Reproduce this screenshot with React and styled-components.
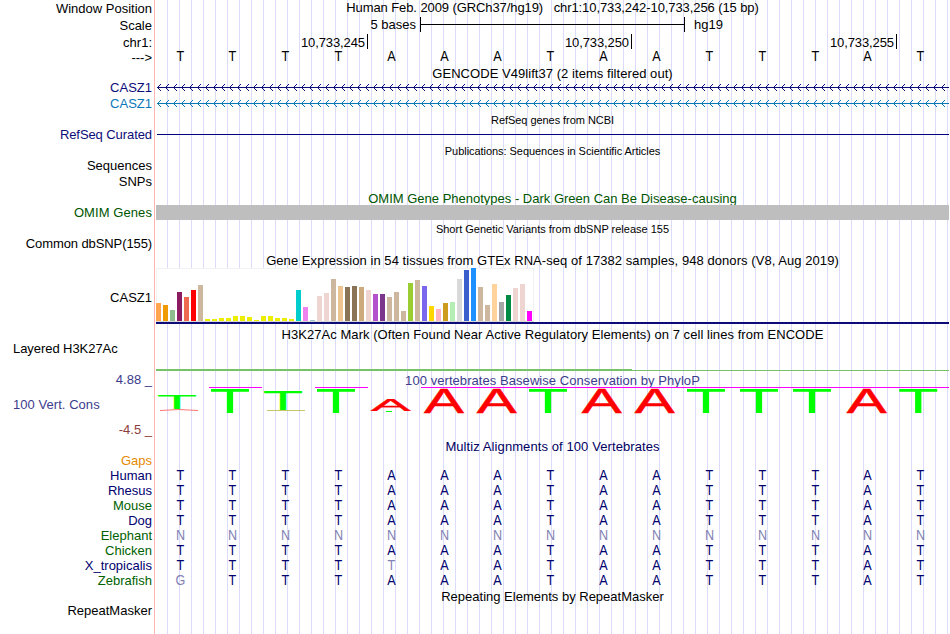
import React from 'react'
import styled, { createGlobalStyle } from 'styled-components'

const GlobalStyle = createGlobalStyle`
body{
margin:0;
background:#ffffff;
overflow:hidden;
}
`
const MainContainer = styled.div`
display:flex;
width:949px;
height:634px;
overflow:hidden;
background:#ffffff;
font-family:"Liberation Sans", Arial, sans-serif;
font-size:13px;
line-height:15px;
color:#000000;
`
const LabelColumn = styled.div`
width:152px;
padding-right:2px;
flex-shrink:0;
border-right:1px solid #ffb4b4;
`
const Label = styled.div`
height:15px;
margin-top:${props => props.$gap || 0}px;
padding-left:13px;
text-align:${props => props.$left ? 'left' : 'right'};
color:${props => props.$color || '#000000'};
letter-spacing:${props => props.$spacing || 0}px;
white-space:pre;
`
const DataColumn = styled.div`
width:793px;
margin-left:1px;
flex-shrink:0;
background:repeating-linear-gradient(to right, transparent 0px, transparent 11px, #dcdcfa 11px, #dcdcfa 12px);
`
const Title = styled.div`
height:${props => props.$height || 15}px;
margin-top:${props => props.$gap || 0}px;
font-size:${props => props.$small ? 11 : 13}px;
letter-spacing:${props => props.$spacing || 0}px;
color:${props => props.$color || '#000000'};
text-align:center;
white-space:pre;
`
const ScaleRow = styled.div`
display:flex;
height:15px;
margin-top:2px;
`
const ScaleText = styled.div`
width:${props => props.$width}px;
padding:0 4px 0 9px;
box-sizing:border-box;
text-align:${props => props.$align};
`
const Ruler = styled.div`
display:flex;
align-items:center;
width:265px;
height:15px;
box-sizing:border-box;
border-left:1px solid #000000;
border-right:1px solid #000000;
`
const RulerLine = styled.div`
flex:1;
height:1px;
background:#000000;
`
const PositionRow = styled.div`
display:flex;
height:15px;
margin-top:2px;
`
const Position = styled.div`
width:${props => props.$width}px;
height:15px;
line-height:17px;
box-sizing:border-box;
padding-right:2px;
border-right:1px solid #000000;
text-align:right;
letter-spacing:-0.1px;
`
const BaseRow = styled.div`
display:grid;
grid-template-columns:repeat(15, 52.93px);
height:15px;
margin-top:${props => props.$gap || 0}px;
margin-left:-2.5px;
color:${props => props.$color || '#00006e'};
`
const Base = styled.span`
text-align:center;
font-size:14px;
transform:scaleX(0.9);
${props => props.$mismatch && 'color:#8282b4;'}
`
const Drawing = styled.svg`
display:block;
margin-top:${props => props.$gap || 0}px;
overflow:visible;
`
const ThinLine = styled.div`
height:1px;
margin:${props => props.$gap || 0}px 0 0 1px;
background:#00007c;
`
const OmimBar = styled.div`
position:relative;
height:15px;
background:#bebebe;
`

const sequence = 'TTTTAAATAATTTAT'

const species = [
    { name: 'Human', color: '#00006e', bases: sequence },
    { name: 'Rhesus', color: '#00006e', bases: sequence },
    { name: 'Mouse', color: '#005f00', bases: sequence },
    { name: 'Dog', color: '#00006e', bases: sequence },
    { name: 'Elephant', color: '#005f00', bases: 'NNNNNNNNNNNNNNN' },
    { name: 'Chicken', color: '#005f00', bases: sequence },
    { name: 'X_tropicalis', color: '#00006e', bases: 'TTTTTAATAATTTAT' },
    { name: 'Zebrafish', color: '#005f00', bases: 'GTTTAAATAATTTAT' },
]

// [height, color] for each tissue
const tissues = [
    [18, '#ffa54f'], [16, '#ee9a00'], [11, '#8fbc8f'], [29, '#8b1c62'], [24, '#ee6a50'], [31, '#ff0000'], [36, '#cdb79e'],
    [2, '#eeee00'], [2, '#eeee00'], [3, '#eeee00'], [3, '#eeee00'], [5, '#eeee00'], [5, '#eeee00'], [4, '#eeee00'],
    [1, '#eeee00'], [5, '#eeee00'], [5, '#eeee00'], [3, '#eeee00'], [3, '#eeee00'], [2, '#eeee00'],
    [31, '#00cdcd'], [14, '#ee82ee'], [1, '#9ac0cd'], [25, '#eed5d2'], [28, '#eed5d2'], [42, '#cdb79e'], [35, '#eec591'],
    [34, '#8b7355'], [35, '#8b7355'], [34, '#cdaa7d'], [31, '#eed5d2'], [27, '#b452cd'], [27, '#7a378b'], [24, '#cdb79e'],
    [29, '#cdb79e'], [10, '#cdb79e'], [38, '#9acd32'], [41, '#cdb79e'], [35, '#7a67ee'], [15, '#ffd700'], [12, '#ffb6c1'],
    [18, '#cd9b1d'], [19, '#b4eeb4'], [42, '#d9d9d9'], [51, '#3a5fcd'], [53, '#1e90ff'], [34, '#cdb79e'], [16, '#cdb79e'],
    [37, '#ffd39b'], [19, '#a6a6a6'], [26, '#008b45'], [33, '#eed5d2'], [37, '#eed5d2'], [10, '#ff00ff'],
]

// letter, center, top and bottom inside the conservation track
const logo = [
    ['T', 21, 8, 22], ['T', 74, 2, 26], ['T', 127, 4, 23], ['T', 180, 2, 26], ['A', 234.8, 12.5, 24],
    ['A', 288, 2, 26], ['A', 340.7, 2, 26], ['T', 392, 2, 26], ['A', 445.8, 2, 26], ['A', 498.8, 2, 26],
    ['T', 550, 2, 26], ['T', 603, 2, 26], ['T', 656, 2, 26], ['A', 710.8, 2, 26], ['T', 762.3, 2, 26],
]

function GeneLine({ id, color, gap }) {
    return (
        <Drawing $gap={gap} width="793" height="7" shapeRendering="crispEdges">
            <defs>
                <pattern id={id} x="1" y="0" width="8" height="7" patternUnits="userSpaceOnUse">
                    <path d="M0 3h8v1h-8zM1 2h1v1h-1zM2 1h1v1h-1zM3 0h1v1h-1zM1 4h1v1h-1zM2 5h1v1h-1zM3 6h1v1h-1z" fill={color} />
                </pattern>
            </defs>
            <rect x="1" y="0" width="792" height="7" fill={`url(#${id})`} />
        </Drawing>
    )
}

function Expression() {
    return (
        <Drawing width="793" height="56" shapeRendering="crispEdges">
            <rect x="0" y="0" width="378" height="54" fill="#f2f2f2" />
            <rect x="1" y="1" width="376" height="52" fill="#ffffff" />
            <rect x="0" y="53" width="378" height="1" fill="#d8d8d8" />
            {tissues.map(([height, color], index) => (
                <rect key={index} x={index * 7} y={53 - height} width="5" height={height} fill={color} />
            ))}
            <rect x="0" y="54" width="793" height="2" fill="#0c0c78" />
        </Drawing>
    )
}

function Conservation() {
    return (
        <Drawing width="793" height="28">
            <path d="M53 0h53v1h-53zM159 0h53v1h-53zM265 0h528v1h-528z" fill="#ff00ff" />
            {logo.map(([letter, x, top, bottom], index) => (
                <text
                    key={index}
                    fontSize="35"
                    textAnchor="middle"
                    fill={letter === 'T' ? '#00ff00' : '#ff0000'}
                    stroke={letter === 'T' ? 'none' : '#ff0000'}
                    strokeWidth="0.5"
                    transform={`translate(${x} ${bottom}) scale(${letter === 'T' ? 1.92 : 1.71} ${(bottom - top) / 24})`}
                >
                    {letter}
                </text>
            ))}
            <path d="M4 23.5q19 -2 38 0" stroke="#ff5050" fill="none" strokeWidth="0.8" />
            <path d="M111 23.5h38" stroke="#b4b43c" strokeWidth="1.2" opacity="0.75" />
            <path d="M230 24.5h6" stroke="#00ff00" strokeWidth="1" />
        </Drawing>
    )
}

function App() {
    return (
        <MainContainer>
            <GlobalStyle />
            <LabelColumn>
                <Label $gap={1}>Window Position</Label>
                <Label $gap={2}>Scale</Label>
                <Label $gap={2}>chr1:</Label>
                <Label>---&gt;</Label>
                <Label $gap={15} $color="#0c0c78">CASZ1</Label>
                <Label $gap={1} $color="#0c78b8">CASZ1</Label>
                <Label $gap={16} $color="#0c0c78" $spacing={-0.08}>RefSeq Curated</Label>
                <Label $gap={16}>Sequences</Label>
                <Label $gap={1}>SNPs</Label>
                <Label $gap={16} $color="#005500" $spacing={0.08}>OMIM Genes</Label>
                <Label $gap={16} $spacing={-0.1}>Common dbSNP(155)</Label>
                <Label $gap={39}>CASZ1</Label>
                <Label $gap={36} $left $spacing={-0.06}>Layered H3K27Ac</Label>
                <Label $gap={16} $color="#3c3c8c">4.88 _</Label>
                <Label $gap={10} $left $color="#3c3c8c" $spacing={0.05}>100 Vert. Cons</Label>
                <Label $gap={10} $color="#8c3c3c">-4.5 _</Label>
                <Label $gap={16} $color="#e68a00">Gaps</Label>
                {species.map((item) => (
                    <Label key={item.name} $color={item.color}>{item.name}</Label>
                ))}
                <Label $gap={15}>RepeatMasker</Label>
            </LabelColumn>
            <DataColumn>
                <Title $spacing={-0.09}>{'Human Feb. 2009 (GRCh37/hg19)   chr1:10,733,242-10,733,256 (15 bp)'}</Title>
                <ScaleRow>
                    <ScaleText $width={264} $align="right">5 bases</ScaleText>
                    <Ruler><RulerLine /></Ruler>
                    <ScaleText $width={60} $align="left">hg19</ScaleText>
                </ScaleRow>
                <PositionRow>
                    <Position $width={212}>10,733,245</Position>
                    <Position $width={264}>10,733,250</Position>
                    <Position $width={265}>10,733,255</Position>
                </PositionRow>
                <BaseRow $color="#000000">
                    {sequence.split('').map((base, index) => <Base key={index}>{base}</Base>)}
                </BaseRow>
                <Title $gap={2} $spacing={0.05}>GENCODE V49lift37 (2 items filtered out)</Title>
                <GeneLine id="codingArrows" color="#0c0c78" gap={3} />
                <GeneLine id="otherArrows" color="#0c78b8" gap={9} />
                <Title $small $gap={6} $spacing={-0.05}>RefSeq genes from NCBI</Title>
                <ThinLine $gap={6} />
                <Title $small $gap={9} $spacing={-0.05}>Publications: Sequences in Scientific Articles</Title>
                <Title $gap={32} $height={14} $color="#005500">OMIM Gene Phenotypes - Dark Green Can Be Disease-causing</Title>
                <OmimBar />
                <Title $small $gap={2}>Short Genetic Variants from dbSNP release 155</Title>
                <Title $gap={16} $spacing={0.06}>Gene Expression in 54 tissues from GTEx RNA-seq of 17382 samples, 948 donors (V8, Aug 2019)</Title>
                <Expression />
                <Title $gap={3} $spacing={0.05}>H3K27Ac Mark (Often Found Near Active Regulatory Elements) on 7 cell lines from ENCODE</Title>
                <Drawing $gap={27} width="793" height="2" shapeRendering="crispEdges">
                    <path d="M0 0h476v1h317v1h-793z" fill="#78c368" />
                </Drawing>
                <Title $gap={2} $height={14} $color="#3c3c8c" $spacing={0.06}>100 vertebrates Basewise Conservation by PhyloP</Title>
                <Conservation />
                <Title $gap={24} $color="#00005f" $spacing={0.09}>Multiz Alignments of 100 Vertebrates</Title>
                <Drawing width="793" height="14" />
                {species.map((item) => (
                    <BaseRow key={item.name}>
                        {item.bases.split('').map((base, index) => (
                            <Base key={index} $mismatch={base !== sequence[index]}>{base}</Base>
                        ))}
                    </BaseRow>
                ))}
                <Title $gap={1}>Repeating Elements by RepeatMasker</Title>
            </DataColumn>
        </MainContainer>
    )
}

export default App
